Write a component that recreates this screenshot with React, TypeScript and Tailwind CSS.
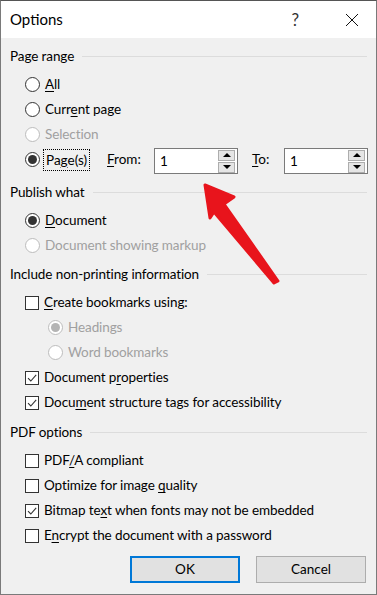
import type {ReactNode} from 'react'

const FONT = {fontFamily: 'Lato, "Noto Sans", sans-serif'}

function Radio({checked, disabled}: {checked?: boolean; disabled?: boolean}) {
  return (
    <span
      className={`flex h-[15px] w-[15px] flex-none items-center justify-center rounded-full border bg-white ${
        disabled ? 'border-[#bcbcbc] bg-[#f7f7f7]' : 'border-[#333]'
      }`}
    >
      {checked && <span className={`h-[9px] w-[9px] rounded-full ${disabled ? 'bg-[#b4b4b4]' : 'bg-[#333]'}`}/>}
    </span>
  )
}

function Check({checked}: {checked?: boolean}) {
  return (
    <span className="flex h-[14px] w-[14px] flex-none items-center justify-center border border-[#333] bg-white">
      {checked && (
        <svg width="12" height="12" viewBox="0 0 12 12">
          <path d="M2 6.2 L4.8 9 L10.2 2.8" fill="none" stroke="#333" strokeWidth="1.1"/>
        </svg>
      )}
    </span>
  )
}

function U({children}: {children: ReactNode}) {
  return <span className="underline underline-offset-2">{children}</span>
}

function Section({title}: {title: string}) {
  return (
    <div className="flex h-[25px] items-center gap-2 pr-[9px]">
      <span className="text-[13.5px] tracking-[-0.1px] text-black">{title}</span>
      <div className="h-px flex-1 bg-[#dcdcdc]"/>
    </div>
  )
}

function Row({
               indent = false,
               disabled = false,
               control,
               children,
             }: {
  indent?: boolean
  disabled?: boolean
  control: ReactNode
  children: ReactNode
}) {
  return (
    <div className={`flex h-[25px] items-center gap-[5px] ${indent ? 'pl-[38px]' : 'pl-[15px]'}`}>
      {control}
      <span className={`text-[13.5px] tracking-[-0.1px] ${disabled ? 'text-[#a0a0a0]' : 'text-black'}`}>
        {children}
      </span>
    </div>
  )
}

function Spin() {
  return (
    <div className="flex h-[26px] w-[84px] items-center border border-[#7a7a7a] bg-white pr-[2px]">
      <span className="flex-1 pl-[5px] text-[13.5px]">1</span>
      <div className="flex flex-col gap-px">
        <span className="flex h-[11px] w-[17px] items-center justify-center border border-[#adadad] bg-[#e5e5e5]">
          <span className="h-0 w-0 border-x-[4px] border-b-[4px] border-x-transparent border-b-black"/>
        </span>
        <span className="flex h-[11px] w-[17px] items-center justify-center border border-[#adadad] bg-[#e5e5e5]">
          <span className="h-0 w-0 border-x-[4px] border-t-[4px] border-x-transparent border-t-black"/>
        </span>
      </div>
    </div>
  )
}

export default function App() {
  return (
    <div style={FONT} className="relative flex h-[595px] w-[377px] flex-col border border-[#7a7a7a] border-t-[#555] bg-[#f0f0f0] text-black">
      <div className="flex h-[37px] flex-none items-center bg-white pl-[9px]">
        <span className="text-[15px] text-black">Options</span>
        <div className="flex-1"/>
        <span className="mr-[46px] text-[17px] text-[#333]">?</span>
        <svg className="mr-[17px]" width="14" height="14" viewBox="0 0 14 14">
          <path d="M1 1 L13 13 M13 1 L1 13" stroke="#111" strokeWidth="1"/>
        </svg>
      </div>

      <div className="flex flex-col pl-[9px] pt-[6px]">
        <Section title="Page range"/>
        <div className="mt-[3px]"/>
        <Row control={<Radio/>}><U>A</U>ll</Row>
        <Row control={<Radio/>}>Curr<U>e</U>nt page</Row>
        <Row control={<Radio disabled/>} disabled>Selection</Row>
        <div className="flex h-[25px] items-center pl-[15px]">
          <Radio checked/>
          <span className="ml-[3px] w-[47px] border border-dotted border-black px-[2px] text-[13.5px] leading-[20px]">
            Pa<U>g</U>e(s)
          </span>
          <span className="ml-[17px] w-[47px] text-[13.5px]"><U>F</U>rom:</span>
          <div className="mt-[3px]"><Spin/></div>
          <span className="ml-[14px] w-[32px] text-[13.5px]"><U>T</U>o:</span>
          <div className="mt-[3px]"><Spin/></div>
        </div>

        <div className="mt-[8px]"/>
        <Section title="Publish what"/>
        <div className="mt-[3px]"/>
        <Row control={<Radio checked/>}><U>D</U>ocument</Row>
        <Row control={<Radio disabled/>} disabled>Document showing markup</Row>

        <div className="mt-[4px]"/>
        <Section title="Include non-printing information"/>
        <div className="mt-[3px]"/>
        <Row control={<Check/>}><U>C</U>reate bookmarks using:</Row>
        <Row indent disabled control={<Radio checked disabled/>}>Headings</Row>
        <Row indent disabled control={<Radio disabled/>}>Word bookmarks</Row>
        <Row control={<Check checked/>}>Document p<U>r</U>operties</Row>
        <Row control={<Check checked/>}>Docu<U>m</U>ent structure tags for accessibility</Row>

        <div className="mt-[5px]"/>
        <Section title="PDF options"/>
        <div className="mt-[3px]"/>
        <Row control={<Check/>}>PDF<U>/</U>A compliant</Row>
        <Row control={<Check/>}>Optimize for image <U>q</U>uality</Row>
        <Row control={<Check checked/>}>Bitmap te<U>x</U>t when fonts may not be embedded</Row>
        <Row control={<Check/>}>E<U>n</U>crypt the document with a password</Row>

        <div className="mt-[8px] flex justify-end gap-[16px] pr-[10px]">
          <button className="flex h-[27px] w-[110px] items-center justify-center border-2 border-[#0078d7] bg-[#e1e1e1] text-[13.5px]">
            OK
          </button>
          <button className="flex h-[27px] w-[110px] items-center justify-center border border-[#adadad] bg-[#e1e1e1] text-[13.5px]">
            Cancel
          </button>
        </div>
      </div>

      <svg className="pointer-events-none absolute left-0 top-0" width="377" height="595" viewBox="0 0 377 595">
        <path
          d="M204 184 L233 196 L223 203 L277 280 L273 282 L213 211 L209 217 Z"
          fill="#e8141c"
          stroke="#e8141c"
          strokeWidth="3"
          strokeLinejoin="round"
        />
      </svg>
    </div>
  )
}
